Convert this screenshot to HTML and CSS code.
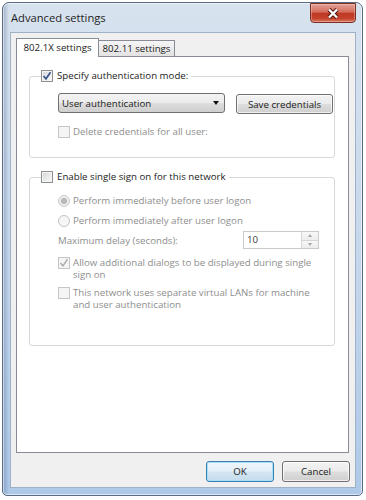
FILE: index.html
```html
<!DOCTYPE html>
<html lang="en">
<head>
  <meta charset="UTF-8" />
  <title>Advanced settings</title>
  <link rel="stylesheet" href="styles.css">
</head>
<body>
  <div class="window">
    <div class="titlebar">
      <span class="title">Advanced settings</span>
      <span class="close">
        <svg width="12" height="11" viewBox="0 0 12 11">
          <path d="M2 1.5 L10 9.5 M10 1.5 L2 9.5" stroke="#4a130c" stroke-width="4.2" fill="none"/>
          <path d="M2 1.5 L10 9.5 M10 1.5 L2 9.5" stroke="#ffffff" stroke-width="2.4" fill="none"/>
        </svg>
      </span>
    </div>

    <div class="client">
      <div class="tabs">
        <div class="tab active">802.1X settings</div>
        <div class="tab">802.11 settings</div>
      </div>

      <div class="panel">
        <fieldset class="group group-auth">
          <legend>
            <label class="check">
              <span class="box">
                <svg width="10" height="10" viewBox="0 0 10 10"><path d="M1.5 5 L4 7.8 L8.5 1.2" fill="none" stroke="#3b5789" stroke-width="1.7"/></svg>
              </span>
              <span class="text">Specify authentication mode:</span>
            </label>
          </legend>
          <div class="group-body">
            <div class="auth-row">
              <div class="select">
                <span>User authentication</span>
                <span class="arrow"></span>
              </div>
              <button class="btn btn-save">Save credentials</button>
            </div>
            <label class="check disabled delete-row">
              <span class="box"></span>
              <span class="text">Delete credentials for all user:</span>
            </label>
          </div>
        </fieldset>

        <fieldset class="group group-sso">
          <legend>
            <label class="check">
              <span class="box"></span>
              <span class="text">Enable single sign on for this network</span>
            </label>
          </legend>
          <div class="group-body">
            <label class="check disabled radio-row">
              <span class="radio on"></span>
              <span class="text">Perform immediately before user logon</span>
            </label>
            <label class="check disabled radio-row second">
              <span class="radio"></span>
              <span class="text">Perform immediately after user logon</span>
            </label>
            <div class="delay-row disabled">
              <span class="text">Maximum delay (seconds):</span>
              <div class="spin">
                <span class="spin-value">10</span>
                <span class="spin-btns">
                  <span class="spin-up"></span>
                  <span class="spin-down"></span>
                </span>
              </div>
            </div>
            <label class="check disabled multi dialogs-row">
              <span class="box">
                <svg width="10" height="10" viewBox="0 0 10 10"><path d="M1.5 5 L4 7.8 L8.5 1.2" fill="none" stroke="#a9a9a9" stroke-width="1.4"/></svg>
              </span>
              <span class="text">Allow additional dialogs to be displayed during single sign on</span>
            </label>
            <label class="check disabled multi vlan-row">
              <span class="box"></span>
              <span class="text">This network uses separate virtual LANs for machine and user authentication</span>
            </label>
          </div>
        </fieldset>
      </div>

      <div class="actions">
        <button class="btn btn-default">OK</button>
        <button class="btn">Cancel</button>
      </div>
    </div>
  </div>
</body>
</html>
```

FILE: styles.css
```css
body {
  margin: 0;
  background: #ffffff;
  font-family: "Open Sans", "Noto Sans", sans-serif;
  font-size: 9.7px;
  color: #1b1b1b;
}

/* window frame */
.window {
  box-sizing: border-box;
  width: 361px;
  height: 494px;
  margin: 2px 0 0 2px;
  padding: 0 6px 7px 7px;
  display: flex;
  flex-direction: column;
  border: 1px solid #5a6b82;
  border-radius: 7px 7px 5px 5px;
  background:
    linear-gradient(90deg, rgba(60, 90, 135, 0.35), rgba(60, 90, 135, 0) 6px),
    linear-gradient(180deg, #d7e2ee 0%, #c8d9ec 45%, #aec9e8 100%);
  box-shadow: inset 0 0 0 1px rgba(255, 255, 255, 0.55);
}

.titlebar {
  height: 29px;
  display: flex;
  align-items: center;
  padding-left: 1px;
}

.title {
  font-size: 11.2px;
  color: #1e1e1e;
}

.close {
  box-sizing: border-box;
  align-self: flex-start;
  margin-left: auto;
  width: 46px;
  height: 20px;
  display: flex;
  align-items: center;
  justify-content: center;
  border: 1px solid #7a3027;
  border-radius: 0 0 4px 4px;
  background: linear-gradient(180deg, #e2a297 0%, #d46c5c 45%, #bf3924 52%, #c4422c 80%, #dc7b62 100%);
  box-shadow: inset 0 0 0 1px rgba(255, 220, 210, 0.35);
}

/* client area */
.client {
  flex: 1;
  display: flex;
  flex-direction: column;
  padding: 5px 6px 0 5px;
  background: #f0f0f0;
  border: 1px solid #9fb1c7;
}

.tabs {
  display: flex;
  align-items: flex-end;
  height: 19px;
  margin-bottom: -1px;
}

.tab {
  box-sizing: border-box;
  width: 77px;
  height: 17px;
  margin-left: -1px;
  border: 1px solid #898c95;
  border-bottom: none;
  background: linear-gradient(180deg, #f5f5f5, #e1e1e1);
  text-align: center;
  line-height: 16px;
}

.tab.active {
  position: relative;
  z-index: 1;
  width: 83px;
  height: 19px;
  margin-left: 0;
  background: #ffffff;
  line-height: 17px;
}

.panel {
  flex: 1;
  border: 1px solid #898c95;
  background: #ffffff;
}

/* group boxes */
.group {
  min-width: 0;
  margin: 13px 13px 0 12px;
  padding: 0;
  border: 1px solid #d8d8d8;
  border-radius: 3px;
}

.group legend {
  margin-left: 11px;
  padding: 0 3px 0 0;
}

.group-body {
  padding: 11px 1px 19px 28px;
}

.group-sso .group-body {
  padding: 12px 1px 34px 28px;
}

.check {
  display: flex;
  align-items: center;
  gap: 3px;
  line-height: 12px;
}

.group legend .check {
  gap: 4px;
}

.check.multi {
  align-items: flex-start;
}

.check.multi .text {
  max-width: 250px;
}

.disabled {
  color: #8e8e8e;
}

.box {
  box-sizing: border-box;
  flex: none;
  width: 12px;
  height: 12px;
  display: flex;
  align-items: center;
  justify-content: center;
  border: 1px solid #8e8f8f;
  background: linear-gradient(135deg, #d3d6da, #fafafa);
  box-shadow: inset 0 0 0 1px #f4f4f4;
}

.disabled .box {
  border-color: #c6c6c6;
  background: #f4f4f4;
}

.radio {
  box-sizing: border-box;
  flex: none;
  width: 12px;
  height: 12px;
  border: 1px solid #c4c4c4;
  border-radius: 50%;
  background: #f6f6f6;
}

.radio.on {
  background: radial-gradient(circle, #b9b9b9 0, #b9b9b9 2.5px, #e4e4e4 3.5px, #f6f6f6 4.5px);
}

/* authentication row */
.auth-row {
  display: flex;
  align-items: flex-start;
  gap: 11px;
}

.select {
  box-sizing: border-box;
  width: 167px;
  height: 20px;
  display: flex;
  align-items: center;
  justify-content: space-between;
  padding: 0 5px 0 3px;
  border: 1px solid #707070;
  border-radius: 3px;
  background: linear-gradient(180deg, #f3f3f3 0%, #ebebeb 48%, #dddddd 52%, #cfcfcf 100%);
}

.arrow {
  width: 0;
  height: 0;
  border-left: 3.5px solid transparent;
  border-right: 3.5px solid transparent;
  border-top: 4px solid #111111;
}

.btn {
  box-sizing: border-box;
  height: 21px;
  padding: 0;
  font: inherit;
  color: #1b1b1b;
  border: 1px solid #707070;
  border-radius: 3px;
  background: linear-gradient(180deg, #f3f3f3 0%, #ebebeb 48%, #dddddd 52%, #cfcfcf 100%);
  box-shadow: inset 0 0 0 1px rgba(255, 255, 255, 0.7);
}

.btn-save {
  width: 97px;
  height: 20px;
  margin-top: 1px;
}

.delete-row {
  margin-top: 12px;
}

/* single sign on */
.radio-row.second {
  margin-top: 8px;
}

.delay-row {
  display: flex;
  align-items: center;
  height: 18px;
  margin-top: 4px;
}

.spin {
  box-sizing: border-box;
  display: flex;
  width: 76px;
  height: 18px;
  margin-left: auto;
  margin-right: 14px;
  border: 1px solid #cacaca;
  background: #ffffff;
}

.spin-value {
  flex: 1;
  padding-left: 3px;
  line-height: 16px;
  color: #3a3a3a;
}

.spin-btns {
  width: 16px;
  display: flex;
  flex-direction: column;
  border-left: 1px solid #d6d6d6;
}

.spin-up,
.spin-down {
  flex: 1;
  display: flex;
  align-items: center;
  justify-content: center;
  background: linear-gradient(180deg, #f8f8f8, #ececec);
}

.spin-up {
  border-bottom: 1px solid #d6d6d6;
}

.spin-up::after,
.spin-down::after {
  content: "";
  border-left: 2.5px solid transparent;
  border-right: 2.5px solid transparent;
}

.spin-up::after {
  border-bottom: 3px solid #a8a8a8;
}

.spin-down::after {
  border-top: 3px solid #a8a8a8;
}

.dialogs-row {
  margin-top: 8px;
}

.vlan-row {
  margin-top: 6px;
}

/* dialog buttons */
.actions {
  display: flex;
  justify-content: flex-end;
  gap: 8px;
  padding: 8px 0 5px;
  margin-right: -1px;
}

.actions .btn {
  width: 68px;
}

.btn-default {
  border-color: #3c7fb1;
  background: linear-gradient(180deg, #eef6fb 0%, #e4eff7 48%, #d3e5f2 52%, #c5dced 100%);
  box-shadow: inset 0 0 0 1px #a7e1f8;
}
```
